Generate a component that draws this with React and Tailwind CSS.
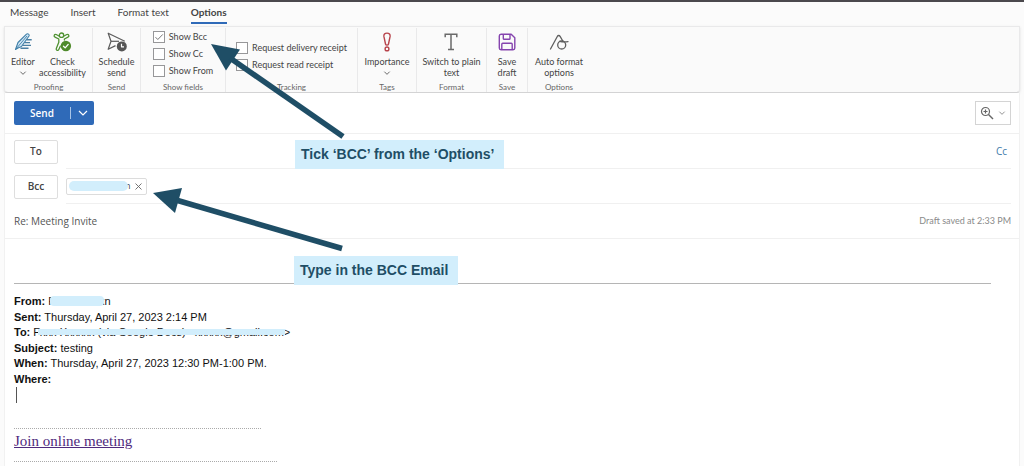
import React, { useState } from 'react';

const CheckIcon = () => (
  <svg
    className="pointer-events-none absolute size-3 opacity-0 peer-checked:opacity-100"
    viewBox="0 0 12 12"
    fill="none"
    stroke="#666"
    strokeWidth="0.9"
  >
    <path d="M2.5 6.2 4.8 8.5 9.8 3.4" />
  </svg>
);

const ChevronDown = ({ className }) => (
  <svg className={className} viewBox="0 0 10 6" fill="none" stroke="currentColor" strokeWidth="1.2">
    <path d="M1 1l4 4 4-4" />
  </svg>
);

const EditorIcon = () => (
  <svg className="size-5" viewBox="0 0 20 20" fill="none" strokeLinejoin="round">
    <path d="M2.5 17.5 5 10.5 13.5 2.2c1.2-1.2 3.4.3 2.5 1.8L8.5 14.5 5 16z" fill="#cfe6f5" stroke="#3f7fa8" strokeWidth="1.1" />
    <path d="M2.5 17.5 14 4" stroke="#3f7fa8" strokeWidth="0.9" />
    <path d="M13.5 7.8h5.2M11.5 10.6h5.5M9.5 13.4h8.5M7.5 16.2h8" stroke="#4a7fa3" strokeWidth="1.4" />
  </svg>
);

const AccessibilityIcon = () => (
  <svg className="size-5" viewBox="0 0 20 20" fill="none" stroke="#4f9231" strokeWidth="1.3" strokeLinecap="round" strokeLinejoin="round">
    <circle cx="9.500" cy="3.2" r="2.2" />
    <path d="M7.4 4.2 4.2 2.5c-1.8-.8-3 1.7-1.2 2.6L6.8 7v3.2L4.3 16.500c-.6 1.8 1.7 2.7 2.5 1l1.5-3.3" />
    <path d="M11.6 4.2l3.2-1.7c1.800-.8 3 1.700 1.200 2.600L12.400 7v1" />
    <circle cx="13.900" cy="14" r="5.200" fill="#4f8a2b" stroke="none" />
    <path d="M11.500 14.200l1.700 1.700 3-3.500" stroke="#fff" strokeWidth="1.3" />
  </svg>
);

const ScheduleIcon = () => (
  <svg className="size-5" viewBox="0 0 20 20" fill="none" stroke="#5c5c5c" strokeWidth="1.2" strokeLinejoin="round">
    <path d="M8.5 13.6 1.2 17.3 4 9.3 1.2 1.2 17.8 9.3" />
    <path d="M4 9.3h8" />
    <circle cx="14.8" cy="14.4" r="5" fill="#555" stroke="none" />
    <path d="M14.5 11.8v3H17" stroke="#fff" />
  </svg>
);

const ImportanceIcon = () => (
  <svg className="size-5" viewBox="0 0 20 20" fill="none" stroke="#b8444c" strokeWidth="1.4">
    <path d="M10 1.1c-2.2 0-3.4 1.4-3.1 3.3L8.5 12c.3 1.5 2.7 1.5 3 0l1.6-7.6c.3-1.9-.9-3.3-3.1-3.3z" />
    <circle cx="10" cy="16.9" r="1.9" />
  </svg>
);

const PlainTextIcon = () => (
  <svg className="size-5" viewBox="0 0 20 20" fill="none" stroke="#6a6a6a" strokeWidth="1.5">
    <path d="M4.2 5.2V2.2h11.6v3M10 2.2v15.4M7 17.6h6" />
  </svg>
);

const SaveIcon = () => (
  <svg className="size-5" viewBox="0 0 20 20" fill="none" stroke="#8544ae" strokeWidth="1.4" strokeLinejoin="round">
    <path d="M4 2.2h10.200l3.600 3.500V16c0 1-.7 1.700-1.700 1.700H4c-1 0-1.700-.7-1.700-1.700V4c0-1 .7-1.800 1.700-1.800z" />
    <path d="M6.3 2.4v4c0 .6.3.9.9.9h4.900c.6 0 .9-.3.9-.9v-4M4.8 17.5v-5.3c0-.6.3-.9.9-.9h8.600c.6 0 .9.3.9.9v5.3" />
  </svg>
);

const AutoFormatIcon = () => (
  <svg className="size-5" viewBox="0 0 20 20" fill="none" stroke="#5f5f5f" strokeWidth="1.3" strokeLinecap="round">
    <path d="M1.5 17 8.3 4.500c.7-1.300 2.100-1.300 2.800-.1L13.800 9M10.800 9.300c2.400.7 5.200.8 8.200.3" />
    <circle cx="12.7" cy="13" r="4" />
  </svg>
);

const RibbonButton = ({ icon, lines, menu }) => (
  <button type="button" className="flex flex-col items-center pt-1 text-[9px] leading-[11px]">
    {icon}
    <span className="mt-1 whitespace-nowrap">{lines[0]}</span>
    {menu ? (
      <ChevronDown className="mt-1 h-1 w-2" />
    ) : (
      <span className="whitespace-nowrap">{lines[1]}</span>
    )}
  </button>
);

const RibbonGroup = ({ label, className, children }) => (
  <section
    className={`flex shrink-0 flex-col items-center justify-between border-r border-[#e9e9ea] ${className}`}
  >
    <div className="flex gap-1">{children}</div>
    <h2 className="text-[8px] leading-[10px] text-[#666]">{label}</h2>
  </section>
);

const Checkbox = ({ label, defaultChecked }) => (
  <label className="relative flex h-[17px] items-center gap-1 text-[9px] whitespace-nowrap">
    <input
      type="checkbox"
      defaultChecked={defaultChecked}
      className="peer size-3 appearance-none border border-[#979799] bg-white"
    />
    <CheckIcon />
    {label}
  </label>
);

const FieldButton = ({ children }) => (
  <button
    type="button"
    className="h-6 w-11 shrink-0 rounded-xs border border-[#dedede] text-[10px] font-semibold text-[#444]"
  >
    {children}
  </button>
);

const Callout = ({ className, children }) => (
  <p
    className={`absolute bg-[#d2eefc] pr-2.5 pl-1.5 font-['Liberation_Sans',sans-serif] text-sm leading-[29px] font-bold whitespace-nowrap text-[#1f4e66] ${className}`}
  >
    {children}
  </p>
);

const tabs = ['Message', 'Insert', 'Format text', 'Options'];

const App = () => {
  const [activeTab, setActiveTab] = useState('Options');
  const [subject, setSubject] = useState('Re: Meeting Invite');

  return (
    <div className="relative min-h-screen overflow-hidden border-t-2 border-[#4b494d] bg-[#fbfbfb] px-1 font-['Open_Sans','Noto_Sans',sans-serif] text-[#444]">
      <nav className="flex h-6 gap-[22px] pl-1.5 font-['Lato',sans-serif] text-[10px]">
        {tabs.map((tab) => (
          <button
            key={tab}
            type="button"
            onClick={() => setActiveTab(tab)}
            className={
              tab === activeTab
                ? 'h-[22px] border-b-2 border-[#2f6ab8] font-bold'
                : 'h-[22px] border-b-2 border-transparent'
            }
          >
            {tab}
          </button>
        ))}
      </nav>

      <div className="flex h-[67px] rounded-b-sm border border-[#e9e9ea] border-b-[#d3d3d4] bg-[#fafafa] pt-px font-['Lato',sans-serif] shadow-sm">
        <RibbonGroup label="Proofing" className="w-[88px]">
          <RibbonButton icon={<EditorIcon />} lines={['Editor']} menu />
          <RibbonButton icon={<AccessibilityIcon />} lines={['Check', 'accessibility']} />
        </RibbonGroup>
        <RibbonGroup label="Send" className="w-12">
          <RibbonButton icon={<ScheduleIcon />} lines={['Schedule', 'send']} />
        </RibbonGroup>
        <RibbonGroup label="Show fields" className="w-[85px]">
          <div>
            <Checkbox label="Show Bcc" defaultChecked />
            <Checkbox label="Show Cc" />
            <Checkbox label="Show From" />
          </div>
        </RibbonGroup>
        <RibbonGroup label="Tracking" className="w-[132px]">
          <div className="pt-[11px]">
            <Checkbox label="Request delivery receipt" />
            <Checkbox label="Request read receipt" />
          </div>
        </RibbonGroup>
        <RibbonGroup label="Tags" className="w-[59px]">
          <RibbonButton icon={<ImportanceIcon />} lines={['Importance']} menu />
        </RibbonGroup>
        <RibbonGroup label="Format" className="w-[70px]">
          <RibbonButton icon={<PlainTextIcon />} lines={['Switch to plain', 'text']} />
        </RibbonGroup>
        <RibbonGroup label="Save" className="w-[41px]">
          <RibbonButton icon={<SaveIcon />} lines={['Save', 'draft']} />
        </RibbonGroup>
        <RibbonGroup label="Options" className="w-[62px] border-r-0">
          <RibbonButton icon={<AutoFormatIcon />} lines={['Auto format', 'options']} />
        </RibbonGroup>
      </div>

      <main className="border-x border-[#f1f1f1] bg-white">
        <div className="flex h-[41px] items-center justify-between border-b border-[#f0f0f0] pr-2 pl-[9px]">
          <div className="flex h-6 items-center rounded-xs bg-[#2f6ab8] text-white">
            <button type="button" className="w-14 text-[10px] font-semibold">
              Send
            </button>
            <button type="button" aria-label="Send options" className="flex h-3 w-6 items-center justify-center border-l border-[#a9c4e6]">
              <ChevronDown className="h-1.5 w-2.5" />
            </button>
          </div>
          <button
            type="button"
            aria-label="Zoom"
            className="flex h-6 w-9 items-center justify-between border border-[#d4d4d4] px-1 text-[#777]"
          >
            <svg className="size-3.5" viewBox="0 0 14 14" fill="none" stroke="#666" strokeWidth="1.2">
              <circle cx="5.5" cy="5.5" r="4" />
              <path d="M3.5 5.5h4M5.5 3.5v4" />
              <path d="M8.5 8.5 13 13" strokeWidth="1.4" />
            </svg>
            <ChevronDown className="h-1 w-2" />
          </button>
        </div>

        <div className="flex h-[35px] items-center gap-2 pr-2 pl-[9px]">
          <FieldButton>To</FieldButton>
          <div className="flex h-full flex-1 items-center border-b border-[#f0f0f0]">
            <input aria-label="To" className="h-6 flex-1 text-[10px] outline-none" />
            <a href="#cc" className="pr-1 text-[10px] text-[#3f7cab]">
              Cc
            </a>
          </div>
        </div>

        <div className="flex h-[35px] items-center gap-2 pr-2 pl-[9px]">
          <FieldButton>Bcc</FieldButton>
          <div className="flex h-full flex-1 items-center border-b border-[#f0f0f0]">
            <div className="flex h-[17px] w-[81px] items-center rounded-xs border border-[#dcdcdc] pl-0.5 text-[9px]">
              <span className="z-10 h-2.5 w-[59px] rounded-full bg-[#d2eefc]" />
              <span className="-ml-[3px]">n</span>
              <button type="button" aria-label="Remove recipient" className="ml-1">
                <svg className="size-[7px]" viewBox="0 0 7 7" stroke="#666" strokeWidth="0.9">
                  <path d="M.5.5l6 6M6.5.5l-6 6" />
                </svg>
              </button>
            </div>
            <input aria-label="Bcc" className="h-6 flex-1 text-[10px] outline-none" />
          </div>
        </div>

        <div className="flex h-[35px] items-center border-b border-[#f0f0f0] pr-2 pl-[9px] text-[#555]">
          <input
            aria-label="Subject"
            value={subject}
            onChange={(e) => setSubject(e.target.value)}
            className="h-6 flex-1 text-[10px] outline-none"
          />
          <span className="font-['Lato',sans-serif] text-[9px] text-[#8a8a8a]">
            Draft saved at 2:33 PM
          </span>
        </div>

        <article className="pt-11 pr-2 pl-[9px] font-['Liberation_Sans',sans-serif] text-[11px] text-[#111]">
          <hr className="mr-5 border-[#b5b5b5]" />
          <div className="mt-2.5 grid h-[93px] grid-rows-6 items-center leading-none">
            <p className="relative">
              <b>From:</b> Fxxxxxxxxxn
              <span className="absolute top-0 left-9 h-2.5 w-[54px] rounded-sm bg-[#d2eefc]" />
            </p>
            <p>
              <b>Sent:</b> Thursday, April 27, 2023 2:14 PM
            </p>
            <p className="relative">
              <b>To:</b> Fxxx Xxxxxx (via Google Docs) &lt;xxxxx@gmail.com&gt;
              <span className="absolute top-0.5 left-6 h-1.5 w-[247px] bg-[#d2eefc]" />
            </p>
            <p>
              <b>Subject:</b> testing
            </p>
            <p>
              <b>When:</b> Thursday, April 27, 2023 12:30 PM-1:00 PM.
            </p>
            <p>
              <b>Where:</b>
            </p>
          </div>
          <div className="ml-0.5 h-4 border-l border-[#555]" />
          <div className="mt-[25px] w-[247px] border-t border-dotted border-[#aaa]" />
          <a
            href="#join"
            className="block font-['Liberation_Serif',serif] text-[15px] leading-6 text-[#4f2a7d] underline"
          >
            Join online meeting
          </a>
          <div className="mt-2 w-[263px] border-t border-dotted border-[#aaa]" />
          <div className="h-1" />
        </article>
      </main>

      <svg
        className="pointer-events-none absolute top-0 left-0 h-[260px] w-[360px]"
        viewBox="0 2 360 260"
        fill="#1f4e66"
        stroke="#1f4e66"
      >
        <path d="M211 44l29 5.5-14 21z" stroke="none" />
        <path d="M230 58l113 78.5" strokeWidth="5.5" />
        <path d="M153 193l29-5-7 25z" stroke="none" />
        <path d="M176 200l166 48.5" strokeWidth="5.5" />
      </svg>
      <Callout className="top-[138px] left-[295px]">Tick ‘BCC’ from the ‘Options’</Callout>
      <Callout className="top-[254px] left-[294px]">Type in the BCC Email</Callout>
    </div>
  );
};

export default App;
